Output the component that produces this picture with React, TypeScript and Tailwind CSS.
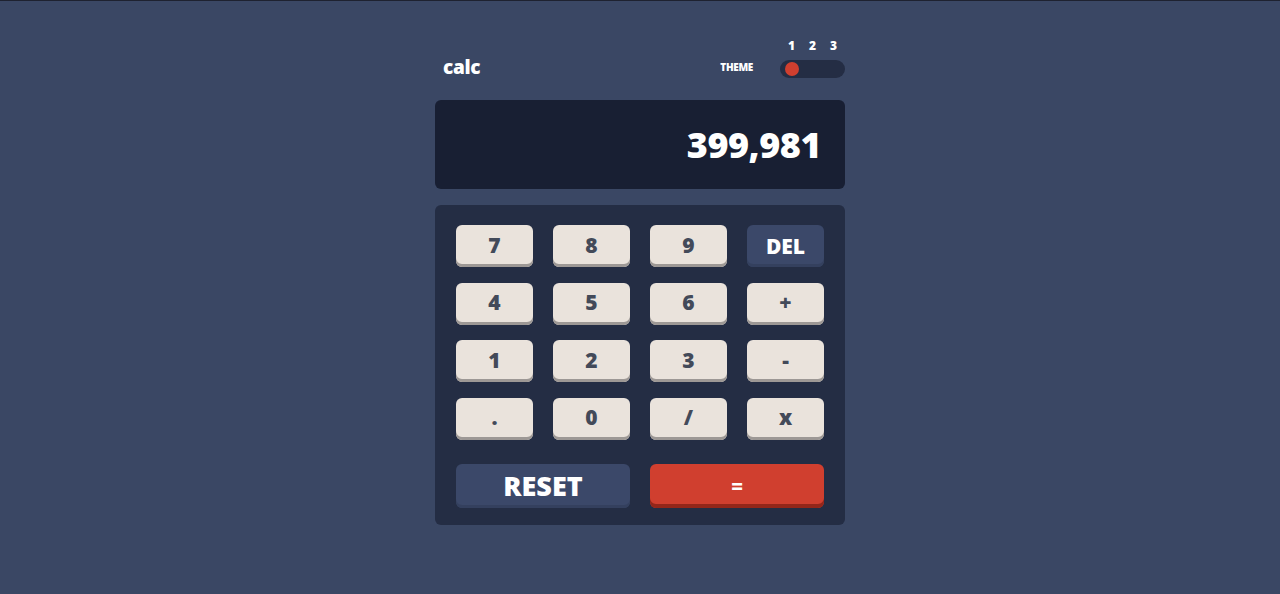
const KEYS = ['7', '8', '9', 'DEL', '4', '5', '6', '+', '1', '2', '3', '-', '.', '0', '/', 'x']

export default function App() {
  return (
    <div
      className="min-h-[594px] w-full bg-[#3a4764] border-t border-[#1e2230] pt-[37px]"
      style={{ fontFamily: '"Open Sans", "Liberation Sans", sans-serif' }}
    >
      <div className="w-[410px] mx-auto">
        {/* Header */}
        <div className="flex items-end justify-between h-[40px]">
          <span className="pl-2 pb-[1px] text-[19px] font-extrabold leading-none text-white tracking-[-0.3px]">calc</span>
          <div className="flex items-end gap-[27px]">
            <span className="mb-[6px] text-[10px] font-extrabold leading-none text-white tracking-[-0.3px]">THEME</span>
            <div className="flex flex-col">
              <div className="flex justify-between px-[8px] mb-[8px] text-[12px] font-extrabold leading-none text-white">
                <span>1</span>
                <span>2</span>
                <span>3</span>
              </div>
              <div className="flex items-center w-[65px] h-[18px] rounded-full bg-[#242d44] px-[5px]">
                <div className="w-[14px] h-[14px] rounded-full bg-[#d03f2f]" />
              </div>
            </div>
          </div>
        </div>

        {/* Screen */}
        <div className="mt-[22px] h-[89px] rounded-md bg-[#181f33] flex items-center justify-end pr-[24px]">
          <span className="text-[36px] font-extrabold leading-none text-white tracking-[-0.5px]">399,981</span>
        </div>

        {/* Keypad */}
        <div className="mt-[16px] rounded-md bg-[#242d44] pt-[20px] px-[21px] pb-[17px]">
          <div className="grid grid-cols-4 gap-x-[20px] gap-y-[15.5px]">
            {KEYS.map(k =>
              k === 'DEL' ? (
                <button
                  key={k}
                  className="h-[42px] rounded-md bg-[#3b4869] shadow-[inset_0_-3px_0_#34405e] text-[21px] font-extrabold leading-none text-white"
                >
                  {k}
                </button>
              ) : (
                <button
                  key={k}
                  className="h-[42px] rounded-md bg-[#eae3dc] shadow-[inset_0_-3px_0_#9d9895] text-[21px] font-extrabold leading-none text-[#434a59] pb-[2px]"
                >
                  {k}
                </button>
              )
            )}
          </div>
          <div className="grid grid-cols-2 gap-x-[20px] mt-[24px]">
            <button className="h-[44px] rounded-md bg-[#3b4869] shadow-[inset_0_-3px_0_#34405e] text-[27px] font-extrabold leading-none text-white">
              RESET
            </button>
            <button className="h-[44px] rounded-md bg-[#d03f2f] shadow-[inset_0_-4px_0_#93261a] text-[20px] font-extrabold leading-none text-white">
              =
            </button>
          </div>
        </div>
      </div>
    </div>
  )
}
